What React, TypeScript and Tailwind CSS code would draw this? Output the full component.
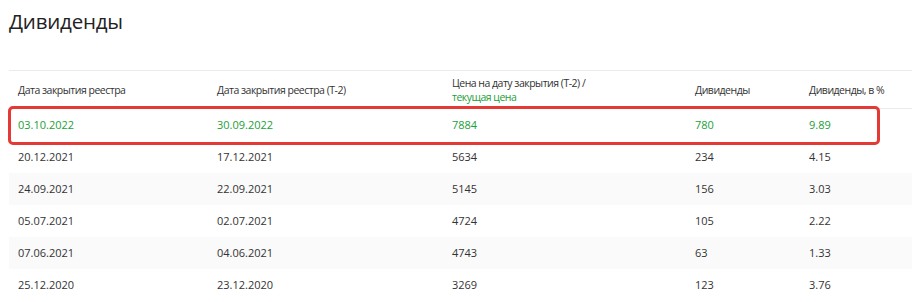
import React from 'react';

const rows = [
  ['20.12.2021', '17.12.2021', '5634', '234', '4.15'],
  ['24.09.2021', '22.09.2021', '5145', '156', '3.03'],
  ['05.07.2021', '02.07.2021', '4724', '105', '2.22'],
  ['07.06.2021', '04.06.2021', '4743', '63', '1.33'],
  ['25.12.2020', '23.12.2020', '3269', '123', '3.76'],
];

const grid = 'grid grid-cols-[199px_235px_243px_114px_1fr] pl-[9px]';

export default function App() {
  return (
    <div className="relative w-[912px] h-[302px] overflow-hidden bg-white text-[#333] font-['Open_Sans',sans-serif]">
      <h1 className="pl-[9px] pt-[5px] h-[70px] text-[20.5px] leading-[32px] tracking-[-0.2px] text-[#222]">Дивиденды</h1>

      <div className="ml-[9px]">
        <div className={`${grid} h-[39px] items-center border-y border-[#eaeaea] text-[10.5px] leading-[14px] tracking-[-0.5px]`}>
          <div>Дата закрытия реестра</div>
          <div>Дата закрытия реестра (T-2)</div>
          <div>
            Цена на дату закрытия (T-2) /
            <div className="text-[#21a038]">текущая цена</div>
          </div>
          <div>Дивиденды</div>
          <div>Дивиденды, в %</div>
        </div>

        <div className={`${grid} h-[32px] items-center text-[11px] text-[#21a038]`}>
          <div>03.10.2022</div>
          <div>30.09.2022</div>
          <div>7884</div>
          <div>780</div>
          <div>9.89</div>
        </div>

        {rows.map((r, i) => (
          <div
            key={r[0]}
            className={`${grid} h-[32px] items-center text-[11px] ${i % 2 === 1 ? 'bg-[#fafafa]' : ''}`}
          >
            {r.map((c, j) => (
              <div key={j}>{c}</div>
            ))}
          </div>
        ))}
      </div>

      {/* annotation frame around the latest payout */}
      <div className="absolute left-[8px] top-[106px] w-[872px] h-[39px] rounded-[5px] border-[3px] border-[#e53935] pointer-events-none" />
    </div>
  );
}
